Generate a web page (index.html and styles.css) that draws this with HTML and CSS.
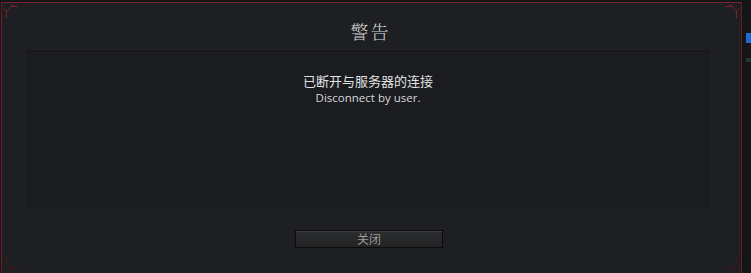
FILE: index.html
```html
<!DOCTYPE html>
<html>
<head><meta charset="utf-8"><link rel="stylesheet" href="styles.css"></head>
<body>
<div class="page">
  <div class="dialog">
    <svg class="corner tl" width="20" height="20" viewBox="0 0 20 20"><path d="M5.5 16 V9 L10 4.5 H17 M5.5 9 L3 6.5 M10 4.5 L12.5 2" fill="none" stroke="#7a2129" stroke-width="1"/></svg>
    <svg class="corner tr" width="20" height="20" viewBox="0 0 20 20"><path d="M14.5 16 V9 L10 4.5 H3 M14.5 9 L17 6.5 M10 4.5 L7.5 2" fill="none" stroke="#7a2129" stroke-width="1"/></svg>
    <svg class="corner bl" width="20" height="20" viewBox="0 0 20 20"><path d="M5.5 4 V11 L10 15.5 H17" fill="none" stroke="#4a1419" stroke-width="1"/></svg>
    <svg class="corner br" width="20" height="20" viewBox="0 0 20 20"><path d="M14.5 4 V11 L10 15.5 H3" fill="none" stroke="#4a1419" stroke-width="1"/></svg>
    <h1 class="title">警告</h1>
    <div class="panel">
      <p class="msg">已断开与服务器的连接</p>
      <p class="sub">Disconnect by user.</p>
    </div>
    <div class="actions"><button class="btn">关闭</button></div>
  </div>
  <div class="side"><span class="blue"></span><span class="green"></span></div>
</div>
</body>
</html>
```
FILE: styles.css
```css
html, body { margin: 0; padding: 0; }
body { background: #131416; width: 751px; height: 273px; overflow: hidden; font-family: "Noto Sans CJK SC", "Noto Sans", sans-serif; }
.page { display: flex; height: 273px; }
.dialog {
  position: relative;
  width: 743px;
  height: 273px;
  box-sizing: border-box;
  background: #1d1f23;
  border-top: 2px solid #141518;
  border-left: 1px solid #17181b;
  border-right: 1px solid #101113;
  padding: 12px 25px 0 25px;
  display: flex; flex-direction: column;
}
.dialog::before {
  content: ""; position: absolute; left: 0; top: 0; right: 0; bottom: 0;
  border-left: 1px solid #6a1c24; border-top: 1px solid #7a2129; border-right: 1px solid #6a1c24;
  pointer-events: none;
}
.corner { position: absolute; }
.tl { left: 0; top: 0; }
.tr { right: 0; top: 0; }
.bl { left: 0; bottom: 0; }
.br { right: 0; bottom: 0; }
.title {
  margin: 0; height: 37px; text-align: center;
  font-family: "Noto Serif CJK SC", "Noto Sans CJK SC", serif;
  font-weight: 300; font-size: 18px; line-height: 34px; color: #d4d4d4; letter-spacing: 2px;
  padding-right: 2px;
}
.panel {
  height: 157px; margin-right: 7px; margin-left: 0;
  background: #1a1c20;
  border-top: 1px solid #131417;
  box-shadow: inset 0 1px 0 #261c1f;
  text-align: center;
  padding-top: 20px; box-sizing: border-box;
}
.msg { margin: 0; font-size: 13px; line-height: 18px; color: #e2e2e2; }
.sub { margin: 0; font-family: "Open Sans", "Noto Sans", sans-serif; font-size: 11.5px; line-height: 16px; color: #d8d8d8; }
.actions { display: flex; justify-content: center; padding-top: 22px; padding-right: 5px; }
.btn {
  width: 148px; height: 18px; padding: 0;
  background: linear-gradient(#2c2d2f, #222325);
  border: 1px solid #0c0c0d; box-shadow: inset 0 1px 0 #3a3b3d;
  color: #9a9a9a; font-family: "Noto Sans CJK SC", sans-serif; font-size: 12px; line-height: 16px;
}
.side { flex: 1; background: #141518; position: relative; }
.blue { position: absolute; left: 3px; top: 33px; width: 6px; height: 10px; background: #1a6ad0; }
.green { position: absolute; left: 3px; top: 58px; width: 6px; height: 4px; background: #1f3a2a; }
```
